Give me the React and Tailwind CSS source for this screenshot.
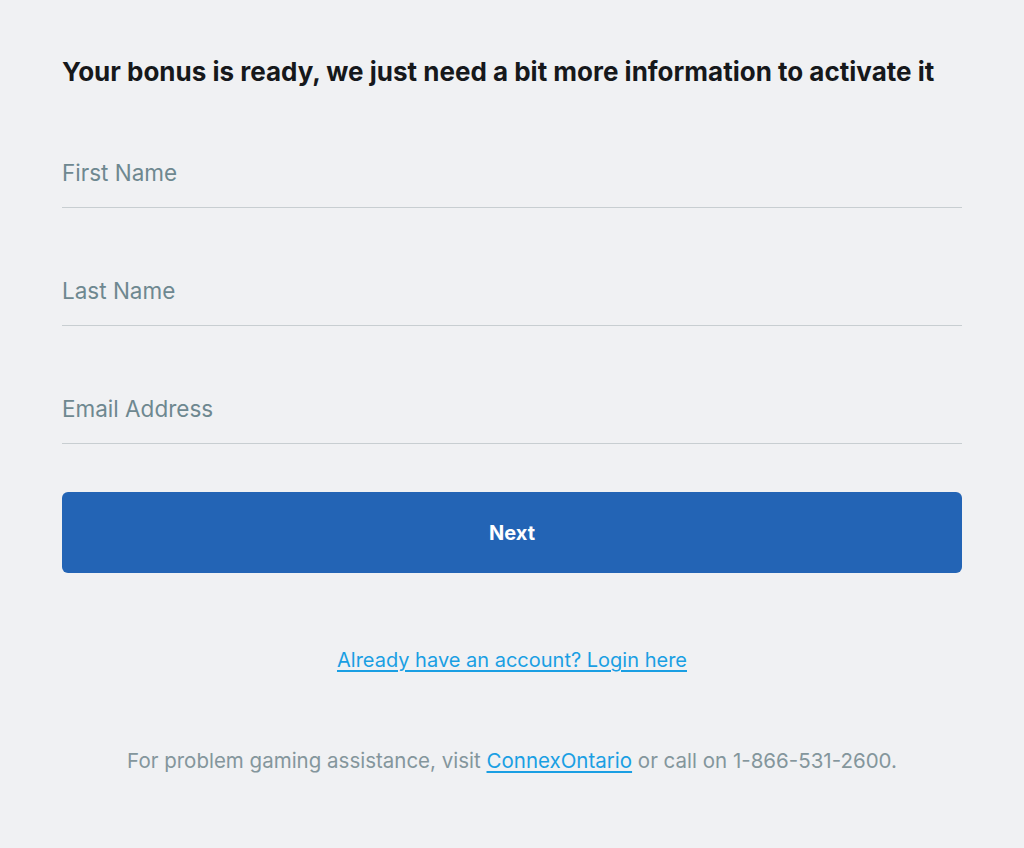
export default function App() {
  const fields = ["First Name", "Last Name", "Email Address"];
  return (
    <div className="min-h-[848px] bg-[#f0f1f3] font-['Inter','Liberation_Sans',sans-serif]">
      <div className="mx-auto w-[900px] pt-[54px]">
        <h1 className="text-[26px] leading-[36px] font-bold text-[#16181b]">
          Your bonus is ready, we just need a bit more information to activate it
        </h1>

        <div>
          {fields.map((f) => (
            <div key={f} className="h-[118px] flex flex-col justify-end">
              <input
                placeholder={f}
                className="w-full bg-transparent outline-none text-[22.5px] leading-[30px] pb-[19px] text-[#333] placeholder:text-[#6e8890] border-b border-[#c8ced1]"
              />
            </div>
          ))}
        </div>

        <button className="mt-[48px] w-full h-[81px] rounded-[6px] bg-[#2364b5] text-white text-[20px] font-bold">
          Next
        </button>

        <div className="mt-[72px] text-center">
          <a href="#" className="text-[20px] text-[#1a9fe3] underline underline-offset-[3px]">
            Already have an account? Login here
          </a>
        </div>

        <p className="mt-[71px] text-center text-[20.5px] text-[#84969c]">
          For problem gaming assistance, visit{" "}
          <a href="#" className="text-[#1a9fe3] underline underline-offset-[3px]">
            ConnexOntario
          </a>{" "}
          or call on 1-866-531-2600.
        </p>
      </div>
    </div>
  );
}
